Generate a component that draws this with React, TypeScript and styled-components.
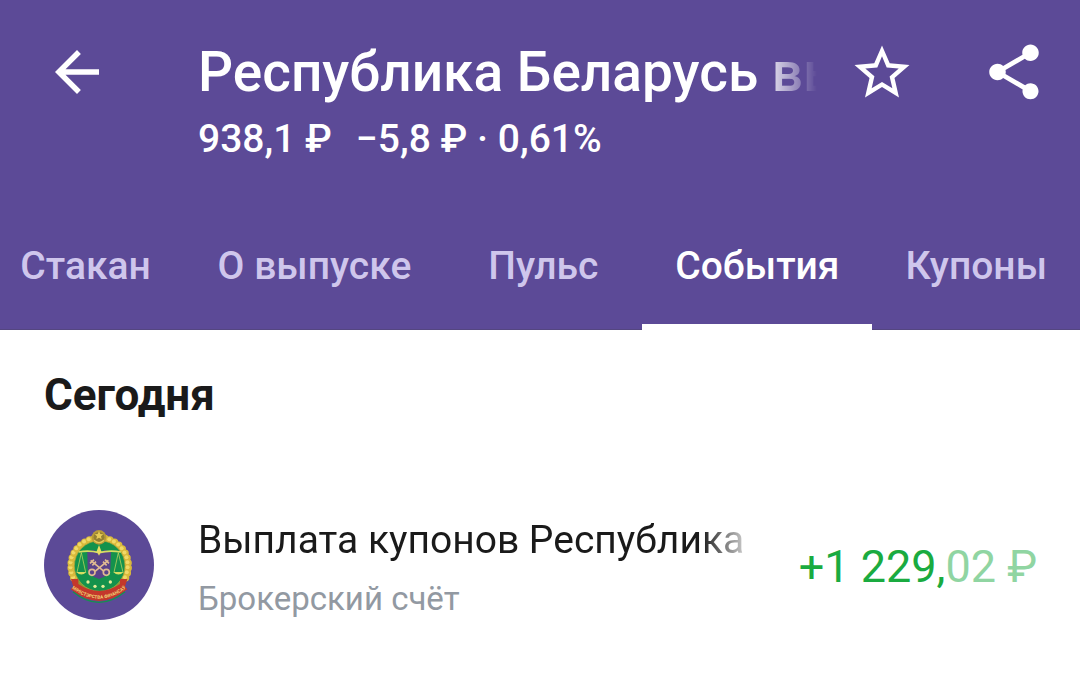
import React, { useState } from 'react'
import styled, { createGlobalStyle } from 'styled-components'

const GlobalStyle = createGlobalStyle`
  body {
    margin: 0;
    background: #ffffff;
    font-family: Roboto, 'Noto Sans', sans-serif;
  }
`
const Header = styled.header`
  background: #5c4a97;
  color: #ffffff;
`
const Toolbar = styled.div`
  display: flex;
  align-items: flex-start;
  padding: 39px 33px 0 44px;
`
const IconButton = styled.button`
  flex: none;
  width: 66px;
  height: 66px;
  padding: 0;
  border: none;
  background: none;
  color: inherit;
  cursor: pointer;

  svg {
    display: block;
    width: 66px;
    height: 66px;
    fill: currentColor;
  }
`
const Heading = styled.div`
  flex: 1;
  min-width: 0;
  margin: 0 32px 0 88px;
`
const Title = styled.h1`
  margin: 0;
  overflow: hidden;
  white-space: nowrap;
  font-weight: 500;
  font-size: 55px;
  line-height: 66px;
  mask-image: linear-gradient(to left, transparent, #000 56px);
`
const Price = styled.p`
  display: flex;
  gap: 24px;
  margin: 8px 0 0;
  font-weight: 500;
  font-size: 39px;
  line-height: 52px;
  white-space: nowrap;
`
const Actions = styled.div`
  display: flex;
  gap: 66px;
`
const Tabs = styled.nav`
  display: flex;
  justify-content: flex-end;
  margin-top: 33px;
  overflow: hidden;
  box-shadow: inset 0 -1px #544680;
`
const Tab = styled.button<{ $active: boolean }>`
  flex: none;
  box-sizing: border-box;
  min-width: 198px;
  height: 132px;
  padding: 10px 33px 0;
  border: none;
  border-bottom: 6px solid ${({ $active }) => ($active ? '#ffffff' : 'transparent')};
  background: none;
  color: ${({ $active }) => ($active ? '#ffffff' : '#cfc6ec')};
  font-family: inherit;
  font-weight: 500;
  font-size: 39px;
  cursor: pointer;
`
const Content = styled.main`
  padding: 36px 43px 36px 44px;
`
const SectionTitle = styled.h2`
  margin: 0;
  color: #1a1a1a;
  font-weight: 700;
  font-size: 44px;
  line-height: 58px;
`
const EventRow = styled.article`
  display: flex;
  align-items: center;
  margin-top: 78px;
`
const Logo = styled.svg`
  flex: none;
  width: 110px;
  height: 110px;
`
const EventInfo = styled.div`
  flex: 1;
  min-width: 0;
  margin: 0 42px 0 44px;
  padding-top: 8px;
`
const EventName = styled.div`
  overflow: hidden;
  white-space: nowrap;
  color: #1a1a1a;
  font-size: 39px;
  line-height: 60px;
  mask-image: linear-gradient(to left, transparent, #000 56px);
`
const Account = styled.div`
  color: #9299a2;
  font-size: 33px;
  line-height: 58px;
`
const Amount = styled.div`
  flex: none;
  padding-top: 4px;
  color: #1aab40;
  font-size: 45px;
  line-height: 58px;
  white-space: nowrap;
`
const Fraction = styled.span`
  color: #90d5a2;
`

const TABS = ['Стакан', 'О выпуске', 'Пульс', 'События', 'Купоны']

// Wreath ears, clockwise from the lower left to the lower right
const EARS = Array.from({ length: 23 }, (_, i) => {
  const angle = ((155 + (i * 230) / 22) * Math.PI) / 180
  return { x: 167 + 86 * Math.cos(angle), y: 168 + 84 * Math.sin(angle) }
})

const MinistryLogo = () => (
  <Logo viewBox="0 0 330 330" role="img" aria-label="Міністэрства фінансаў">
    <circle cx="165" cy="165" r="165" fill="#5c4a97" />
    <circle cx="167" cy="168" r="92" fill="#8f9a35" />
    {EARS.map(({ x, y }, i) => (
      <g key={i}>
        <circle cx={x} cy={y} r="11" fill="#d9b93c" />
        <circle cx={x - 2} cy={y - 2} r="6" fill="#f0d968" />
      </g>
    ))}
    <circle cx="167" cy="168" r="76" fill="#14924c" stroke="#b8a83a" strokeWidth="2" />
    <path d="M130 126 L148 120 L165 126 L183 120 L201 126 L199 178 Q195 198 165 207 Q135 198 131 178 Z" fill="#5a4389" />
    <g fill="none" stroke="#e0bb91" strokeWidth="5">
      <path d="M140 151 L180 184 M193 151 L153 184" />
      <path d="M138 160 L150 149 M145 166 L156 155 M195 160 L183 149 M188 166 L177 155" />
      <circle cx="144" cy="187" r="9" />
      <circle cx="187" cy="187" r="9" />
    </g>
    <g fill="none" stroke="#d7de62" strokeWidth="3">
      <path d="M104 126 Q135 120 165 128 Q196 120 231 126" strokeWidth="5" />
      <path d="M112 128 L99 187 M112 128 L125 187 M223 128 L210 187 M223 128 L237 187" strokeWidth="2" />
    </g>
    <path d="M97 186 H127 Q112 201 97 186 Z M208 186 H239 Q223 201 208 186 Z" fill="#d7de62" />
    <path d="M165 105 L172 124 L165 137 L158 124 Z" fill="#e9dc63" />
    <g fill="#e6ec98">
      <circle cx="132" cy="216" r="5" />
      <circle cx="153" cy="229" r="5" />
      <circle cx="177" cy="229" r="5" />
      <circle cx="199" cy="216" r="5" />
    </g>
    <circle cx="165" cy="82" r="22" fill="#b79a38" />
    <circle cx="165" cy="82" r="16" fill="#927f32" />
    <path d="M165 63 l4 9 9 1 -7 6 2 9 -8 -5 -8 5 2 -9 -7 -6 9 -1z" fill="#e6cb58" />
    <path d="M150 91 Q165 105 180 91" fill="none" stroke="#e6cb58" strokeWidth="4" />
    <path d="M81 207 L103 207 L103 222 Q165 264 228 222 L228 207 L250 207 L243 230 L250 238 Q165 308 80 238 L88 230 Z" fill="#c4382b" />
    <path d="M87 245 Q165 309 243 245" fill="none" stroke="#14924c" strokeWidth="4" />
    <path id="ribbon" d="M78 230 Q165 302 252 230" fill="none" />
    <text fill="#f0d778" fontSize="14" fontWeight="700" textAnchor="middle">
      <textPath href="#ribbon" startOffset="50%">
        МІНІСТЭРСТВА ФІНАНСАЎ
      </textPath>
    </text>
  </Logo>
)

const App: React.FC = () => {
  const [activeTab, setActiveTab] = useState('События')

  return (
    <>
      <GlobalStyle />
      <Header>
        <Toolbar>
          <IconButton aria-label="Назад">
            <svg viewBox="0 0 24 24">
              <path d="M20 11H7.83l5.59-5.59L12 4l-8 8 8 8 1.41-1.41L7.83 13H20v-2z" />
            </svg>
          </IconButton>
          <Heading>
            <Title>Республика Беларусь вы</Title>
            <Price>
              <span>938,1 ₽</span>
              <span>−5,8 ₽ · 0,61%</span>
            </Price>
          </Heading>
          <Actions>
            <IconButton aria-label="В избранное">
              <svg viewBox="0 0 24 24">
                <path d="M22 9.44l-7.19-.62L12 2.4 9.19 8.83 2 9.44l5.46 4.73L5.82 21.3 12 17.47l6.18 3.83-1.63-7.13L22 9.44zM12 15.6l-3.76 2.27 1-4.28-3.32-2.88 4.38-.38L12 6.3l1.71 4.04 4.38.38-3.32 2.88 1 4.28L12 15.6z" />
              </svg>
            </IconButton>
            <IconButton aria-label="Поделиться">
              <svg viewBox="0 0 24 24">
                <path d="M18 16.08c-.76 0-1.44.3-1.96.77L8.91 12.7c.05-.23.09-.46.09-.7s-.04-.47-.09-.7l7.05-4.11c.54.5 1.25.81 2.04.81 1.66 0 3-1.34 3-3s-1.34-3-3-3-3 1.34-3 3c0 .24.04.47.09.7L8.04 9.81C7.5 9.31 6.79 9 6 9c-1.66 0-3 1.34-3 3s1.34 3 3 3c.79 0 1.5-.31 2.04-.81l7.12 4.16c-.05.21-.08.43-.08.65 0 1.61 1.31 2.92 2.92 2.92s2.92-1.31 2.92-2.92-1.31-2.92-2.92-2.92z" />
              </svg>
            </IconButton>
          </Actions>
        </Toolbar>
        <Tabs>
          {TABS.map((tab) => (
            <Tab key={tab} $active={tab === activeTab} onClick={() => setActiveTab(tab)}>
              {tab}
            </Tab>
          ))}
        </Tabs>
      </Header>
      <Content>
        <SectionTitle>Сегодня</SectionTitle>
        <EventRow>
          <MinistryLogo />
          <EventInfo>
            <EventName>Выплата купонов Республика</EventName>
            <Account>Брокерский счёт</Account>
          </EventInfo>
          <Amount>
            +1 229,<Fraction>02 ₽</Fraction>
          </Amount>
        </EventRow>
      </Content>
    </>
  )
}

export default App
